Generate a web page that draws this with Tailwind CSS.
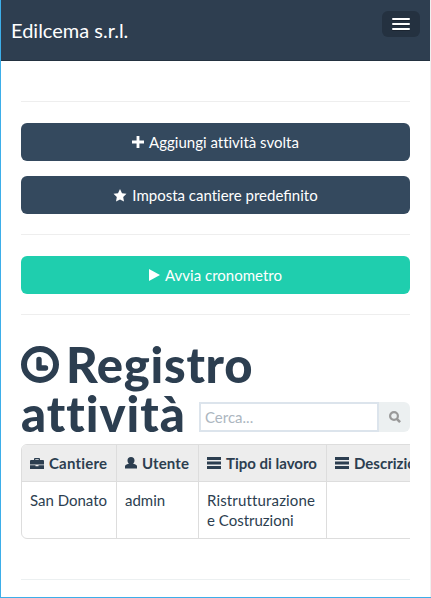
<!DOCTYPE html>
<html lang="it">
<head>
    <meta charset="UTF-8">
    <meta name="viewport" content="width=device-width, initial-scale=1.0">
    <title>Edilcema s.r.l.</title>
    <script src="https://cdn.jsdelivr.net/npm/@tailwindcss/browser@4"></script>
</head>
<body class="bg-white font-['Lato',sans-serif] text-[15px] leading-5 text-[#2c3e50] [font-variant-ligatures:none]">
    <div class="h-[598px] w-[431px] overflow-hidden border-l border-b border-[#3daee9]">
        <div class="h-[597px] border-r border-[#f0f0f0]">

            <!-- navbar -->
            <nav class="flex h-[61px] items-start justify-between border-b border-[#233140] bg-[#2e3e50] pt-[11px] pr-[10px] pl-[10px]">
                <a href="#" class="mt-[9px] text-xl leading-5 text-white">Edilcema s.r.l.</a>
                <button class="flex h-[26px] w-[38px] flex-col items-center justify-center gap-[3px] rounded-md bg-[#243140]">
                    <span class="h-[2px] w-[18px] rounded-[1px] bg-white shadow-[0_1px_0_rgba(0,0,0,0.25)]"></span>
                    <span class="h-[2px] w-[18px] rounded-[1px] bg-white shadow-[0_1px_0_rgba(0,0,0,0.25)]"></span>
                    <span class="h-[2px] w-[18px] rounded-[1px] bg-white shadow-[0_1px_0_rgba(0,0,0,0.25)]"></span>
                </button>
            </nav>

            <main class="px-5 pt-10">
                <hr class="border-[#eeeeee]">

                <button class="mt-[21px] flex h-[38px] w-full items-center justify-center gap-[5px] rounded-md bg-[#34495e] text-white">
                    <svg class="h-3 w-3" viewBox="0 0 11 11" fill="currentColor"><path d="M4.200 0h2.600v4.200H11v2.600H6.800V11H4.200V6.800H0V4.200h4.200z"/></svg>
                    <span>Aggiungi attività svolta</span>
                </button>
                <button class="mt-[15px] flex h-[38px] w-full items-center justify-center gap-[5px] rounded-md bg-[#34495e] text-white">
                    <svg class="h-[13px] w-[14px]" viewBox="0 0 13 13" fill="currentColor"><path d="M6.500 0l2 4.200 4.500.6-3.300 3.200.8 4.500-4-2.100-4 2.100.8-4.500L0 4.800l4.500-.6z"/></svg>
                    <span>Imposta cantiere <span class="[font-variant-ligatures:normal]">predefinito</span></span>
                </button>

                <hr class="mt-5 border-[#eeeeee]">

                <button class="mt-[21px] flex h-[38px] w-full items-center justify-center gap-[5px] rounded-md bg-[#1fceae] text-white">
                    <svg class="h-3 w-[11px]" viewBox="0 0 11 12" fill="currentColor"><path d="M0 0l11 6-11 6z"/></svg>
                    <span>Avvia cronometro</span>
                </button>

                <hr class="mt-5 border-[#eeeeee]">

                <!-- title and search -->
                <div class="relative mt-[25px] h-[103px]">
                    <h1 class="text-[49px] leading-[49px] font-black">
                        <span class="flex items-start gap-[7px]">
                            <svg class="mt-[6px] h-[37px] w-[38px]" viewBox="0 0 38 37" fill="none" stroke="currentColor"><ellipse cx="19" cy="18.500" rx="16" ry="15.500" stroke-width="6"/><path d="M18 13.500v8.500h6.500" stroke-width="5.400" stroke-linecap="round" stroke-linejoin="round"/></svg>
                            <span class="tracking-[0.7px]">Registro</span>
                        </span>
                        <span class="inline-block tracking-[1px]">attività</span>
                    </h1>
                    <form class="absolute right-0 bottom-[11px] flex h-[30px] w-[211px]">
                        <input type="text" placeholder="Cerca..." class="h-[30px] w-[180px] border-2 border-[#dce4ec] bg-white px-1 text-[15px] leading-5 outline-none placeholder:text-[#acb6c0]">
                        <button type="button" class="flex h-[30px] w-[31px] items-center justify-center rounded-r-md bg-[#ecf0f1]">
                            <svg class="h-3 w-3" viewBox="0 0 12 12" fill="none" stroke="#999999"><circle cx="5" cy="5" r="3.900" stroke-width="2.200"/><path d="M7.800 7.800l3.300 3.300" stroke-width="2.600"/></svg>
                        </button>
                    </form>
                </div>

                <!-- work log, cut at the right edge -->
                <div class="mt-px h-[95px] overflow-hidden">
                    <div class="w-[480px] rounded-md border border-[#dddddd]">
                        <div class="grid h-[37px] grid-cols-[95px_82px_128px_1fr] overflow-hidden rounded-t-[5px] border-b border-[#dddddd] bg-[#ededed] font-bold whitespace-nowrap">
                            <div class="flex items-center gap-[5px] border-r border-[#dddddd] pl-2">
                                <svg class="h-[11px] w-[14px]" viewBox="0 0 14 11" fill="currentColor"><path fill-rule="evenodd" d="M4 2V1q0-1 1-1h4q1 0 1 1v1h3q1 0 1 1v3.500H0V3q0-1 1-1zm1.300 0h3.400V1.200H5.300zM0 7.300h5.500v1h3v-1H14V11H0z"/></svg>
                                <span class="tracking-[0.2px]">Cantiere</span>
                            </div>
                            <div class="flex items-center gap-[5px] border-r border-[#dddddd] pl-2">
                                <svg class="h-3 w-3" viewBox="0 0 12 12" fill="currentColor"><path d="M6 0c2.300 0 3.500 1.500 3.500 3.500 0 1.500-.7 2.500-1.500 3l3 1.200q1 .5 1 1.500V11.500H0V9.200q0-1 1-1.500l3-1.200c-.8-.5-1.500-1.500-1.500-3C2.500 1.500 3.700 0 6 0z"/></svg>
                                <span class="tracking-[0.1px]">Utente</span>
                            </div>
                            <div class="flex items-center gap-[5px] border-r border-[#dddddd] pl-2">
                                <svg class="h-3 w-[14px]" viewBox="0 0 14 12" fill="currentColor"><path d="M0 0h14v3H0zM0 4.500h14v3H0zM0 9h14v3H0z"/></svg>
                                <span>Tipo di lavoro</span>
                            </div>
                            <div class="flex items-center gap-[5px] pl-2">
                                <svg class="h-3 w-[14px]" viewBox="0 0 14 12" fill="currentColor"><path d="M0 0h14v3H0zM0 4.500h14v3H0zM0 9h14v3H0z"/></svg>
                                <span>Descrizione</span>
                            </div>
                        </div>
                        <div class="grid h-14 grid-cols-[95px_82px_128px_1fr]">
                            <div class="border-r border-[#dddddd] py-2 pl-2">San Donato</div>
                            <div class="border-r border-[#dddddd] py-2 pl-2">admin</div>
                            <div class="border-r border-[#dddddd] py-2 pl-2"><span class="tracking-[0.15px]">Ristrutturazione</span><br>e Costruzioni</div>
                            <div></div>
                        </div>
                    </div>
                </div>

                <hr class="mt-10 border-[#ecf0f1]">
            </main>
        </div>
    </div>
</body>
</html>
